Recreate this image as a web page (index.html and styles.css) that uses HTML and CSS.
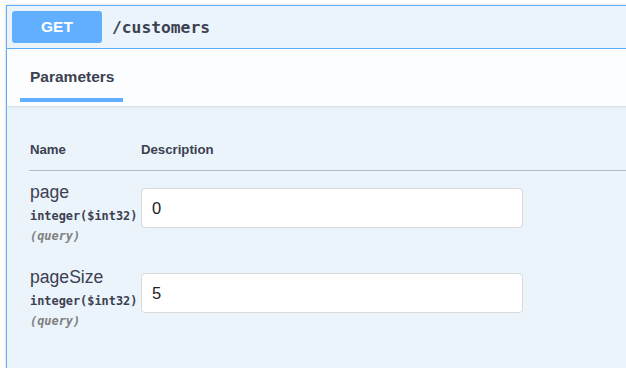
FILE: index.html
```html
<!DOCTYPE html>
<html>
<head>
    <title>GET /customers</title>
    <link rel="stylesheet" href="styles.css">
</head>
<body>
<div class="opblock">
    <div class="summary">
        <span class="method">GET</span>
        <span class="path">/customers</span>
    </div>
    <div class="section-header">
        <div class="tab">Parameters</div>
    </div>
    <div class="params">
        <div class="param-row head">
            <div>Name</div>
            <div>Description</div>
        </div>
        <div class="param-row">
            <div>
                <div class="param-name">page</div>
                <div class="param-type">integer($int32)</div>
                <div class="param-in">(query)</div>
            </div>
            <div><input class="param-input" type="text" value="0"></div>
        </div>
        <div class="param-row">
            <div>
                <div class="param-name">pageSize</div>
                <div class="param-type">integer($int32)</div>
                <div class="param-in">(query)</div>
            </div>
            <div><input class="param-input" type="text" value="5"></div>
        </div>
    </div>
</div>
</body>
</html>
```

FILE: styles.css
```css
body {
    margin: 0;
    background-color: #ffffff;
    font-family: "Liberation Sans", Arial, sans-serif;
    color: #3b4151;
    overflow: hidden;
}

.opblock {
    margin: 5px 0 0 6px;
    width: 640px;
    height: 362px;
    border: 1px solid #61affe;
    border-right: none;
    border-bottom: none;
    background-color: #ebf3fb;
    box-shadow: 0 0 3px rgba(0, 0, 0, 0.19);
}

.summary {
    display: flex;
    align-items: center;
    padding: 5px;
    border-bottom: 1px solid #61affe;
}

.method {
    width: 90px;
    height: 32px;
    line-height: 32px;
    text-align: center;
    background-color: #61affe;
    color: #ffffff;
    border-radius: 3px;
    font-size: 15.5px;
    font-weight: bold;
}

.path {
    margin-left: 10px;
    font-family: "DejaVu Sans Mono", monospace;
    font-size: 16.3px;
    font-weight: bold;
    color: #3b4151;
}

.section-header {
    padding: 18px 0 4px 13px;
    background-color: #fcfdfe;
    box-shadow: 0 1px 2px rgba(0, 0, 0, 0.1);
    position: relative;
}

.tab {
    display: inline-block;
    width: 93px;
    padding-left: 10px;
    padding-bottom: 11px;
    font-size: 15.5px;
    line-height: 20px;
    font-weight: bold;
    border-bottom: 4px solid #61affe;
}

.params {
    padding: 36px 0 0 22px;
}

.param-row {
    display: grid;
    grid-template-columns: 112px 382px;
    padding: 11px 0;
}

.param-row.head {
    padding: 0 0 12px 0;
    border-bottom: 1px solid #b3b9c2;
    font-size: 13.2px;
    line-height: 16px;
    font-weight: bold;
}

.param-row.head div:first-child {
    padding-left: 1px;
}

.param-name {
    padding-left: 1px;
    font-size: 17.6px;
    line-height: 20px;
}

.param-type {
    margin-top: 5px;
    padding-left: 1px;
    font-family: "DejaVu Sans Mono", monospace;
    font-size: 11.9px;
    line-height: 18px;
    font-weight: bold;
    white-space: nowrap;
}

.param-in {
    margin-top: 2px;
    padding-left: 1px;
    font-family: "DejaVu Sans Mono", monospace;
    font-size: 11.9px;
    line-height: 18px;
    font-weight: bold;
    font-style: italic;
    color: #808080;
}

.param-input {
    box-sizing: border-box;
    display: block;
    margin-top: 6px;
    width: 382px;
    height: 40px;
    padding: 0 10px;
    border: 1px solid #d9d9d9;
    border-radius: 4px;
    background-color: #ffffff;
    font-family: "Liberation Sans", Arial, sans-serif;
    font-size: 16.5px;
    color: #222222;
    outline: none;
}
```
